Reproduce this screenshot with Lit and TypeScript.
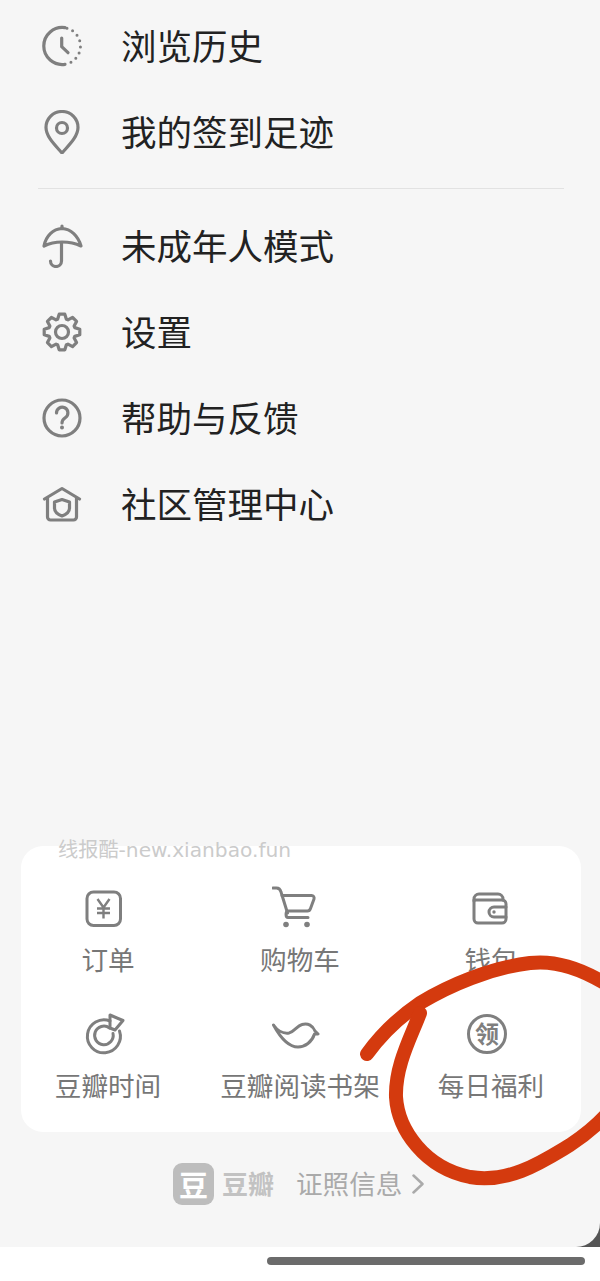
import { LitElement, html, css, svg } from "lit";
import { customElement } from "lit/decorators.js";

function gearPath(cx: number, cy: number, outer: number, root: number, teeth: number) {
  const pts: string[] = [];
  const step = (Math.PI * 2) / teeth;
  for (let i = 0; i < teeth; i++) {
    const a = -Math.PI / 2 + i * step;
    const offs: [number, number][] = [
      [-0.42, root],
      [-0.2, outer],
      [0.2, outer],
      [0.42, root],
    ];
    for (const [o, r] of offs) {
      const t = a + o * step;
      pts.push(`${(cx + r * Math.cos(t)).toFixed(2)} ${(cy + r * Math.sin(t)).toFixed(2)}`);
    }
  }
  return "M" + pts.join("L") + "Z";
}

const rowIcon = (vy: number, body: unknown) => html`<svg class="ri" viewBox="40 ${vy} 44 44">${body}</svg>`;
const cardIcon = (vx: number, vy: number, body: unknown) =>
  html`<svg class="ci" viewBox="${vx} ${vy} 56 44">${body}</svg>`;

const icons = {
  clock: rowIcon(24, svg`
    <path d="M65 27.7A18.500 18.500 0 1 0 65 64.300"/>
    <path class="dots" d="M67 28.200A18.500 18.500 0 0 1 67 63.800"/>
    <path d="M61.700 38V46.700L68 52.700"/>`),
  pin: rowIcon(110, svg`
    <path d="M62 153C56 146 46 137 46 127.500A16 16 0 0 1 78 127.500C78 137 68 146 62 153Z"/>
    <circle cx="62" cy="128" r="5.500"/>`),
  umbrella: rowIcon(224, svg`
    <path d="M44 246C46 236 53 229 62 228.500C71 229 78 236 81 246C75 243 68 242 62 242C56 242 50 243 44 246Z"/>
    <path d="M62 226V228M61.500 243V261A5.500 5.500 0 0 1 50.500 261"/>`),
  gear: rowIcon(310, svg`
    <path d="${gearPath(62, 332, 18, 13.5, 8)}"/>
    <circle cx="62" cy="332" r="6.500"/>`),
  help: rowIcon(396, svg`
    <circle cx="62" cy="418" r="18"/>
    <path d="M56.500 413A5.700 5.700 0 1 1 65.500 417.500C63.300 419 62 420 62 423"/>
    <circle class="fill" cx="62" cy="427.500" r="2"/>`),
  house: rowIcon(482, svg`
    <path d="M44.500 499L62 488.500L79.500 499M47.500 497.500V517A3 3 0 0 0 50.500 520H73.500A3 3 0 0 0 76.500 517V497.500"/>
    <path d="M62 499.500L69.500 502V508C69.500 512.500 66 514.500 62 516C58 514.500 54.500 512.500 54.500 508V502Z"/>`),
  order: cardIcon(80, 886, svg`
    <rect x="87" y="892" width="33.500" height="33.500" rx="6.500"/>
    <path class="thin" d="M97.500 899L103.500 907.500L109.500 899M103.500 908V918.500M97 908.500H110M97 913H110"/>`),
  cart: cardIcon(272, 886, svg`
    <path d="M273 888H276.500C279 888 280.500 890 281 892L287.500 913"/>
    <path d="M282 895.500H311.500C313.500 895.500 314.500 897 314 899L310.500 908.500C310 910 309 911 307.500 911H287.500C285.500 912 285.500 917.500 288 917.500H308"/>
    <circle class="fill" cx="286" cy="924.500" r="2.800"/>
    <circle class="fill" cx="307" cy="924.500" r="2.800"/>`),
  wallet: cardIcon(463, 886, svg`
    <path d="M474 901V899A5 5 0 0 1 479 894H498A5 5 0 0 1 503 899V900"/>
    <path d="M474 900H502A4 4 0 0 1 506 904V919A4 4 0 0 1 502 923H478A4 4 0 0 1 474 919Z"/>
    <path d="M506 907H494A5 5 0 0 0 494 917H506"/>
    <circle class="fill" cx="494" cy="912" r="1.700"/>`),
  time: cardIcon(80, 1012, svg`
    <path d="M110 1021A16.500 16.500 0 1 0 119.500 1031"/>
    <path d="M109.500 1028A9.300 9.300 0 1 0 113 1033.500"/>
    <path d="M110 1015L123 1020.500L115 1030L110 1028Z"/>`),
  bird: cardIcon(272, 1012, svg`
    <path d="M273.500 1025C277 1030 283 1034 289 1033C294 1032 297 1026 302 1024.500C308 1022.500 313 1026 315 1031L318 1034H314.500C312 1042 305 1047 298 1047C289 1047 280 1037 273.500 1025Z"/>`),
  ling: cardIcon(463, 1012, svg`
    <circle cx="487" cy="1034" r="18.500"/>
    <text class="seal" x="487" y="1042.500" text-anchor="middle">领</text>`),
};

const groupA = [
  { icon: icons.clock, label: "浏览历史" },
  { icon: icons.pin, label: "我的签到足迹" },
];
const groupB = [
  { icon: icons.umbrella, label: "未成年人模式" },
  { icon: icons.gear, label: "设置" },
  { icon: icons.help, label: "帮助与反馈" },
  { icon: icons.house, label: "社区管理中心" },
];
const tiles = [
  { icon: icons.order, label: "订单" },
  { icon: icons.cart, label: "购物车" },
  { icon: icons.wallet, label: "钱包" },
  { icon: icons.time, label: "豆瓣时间" },
  { icon: icons.bird, label: "豆瓣阅读书架" },
  { icon: icons.ling, label: "每日福利" },
];

@customElement("app-root")
export class AppRoot extends LitElement {
  static styles = css`
    :host {
      display: block;
      position: relative;
      width: 600px;
      height: 1281px;
      overflow: hidden;
      background: #fff;
      font-family: "Noto Sans CJK SC", "Liberation Sans", sans-serif;
    }
    .frame {
      height: 1247px;
      background: #555;
    }
    .panel {
      height: 100%;
      box-sizing: border-box;
      padding-top: 3px;
      background: #f6f6f6;
      border-bottom-right-radius: 24px;
      display: flex;
      flex-direction: column;
      position: relative;
    }
    .row {
      height: 86px;
      display: flex;
      align-items: center;
      gap: 37px;
      padding-left: 40px;
      font-size: 35.5px;
      color: #222;
    }
    .row span {
      line-height: 84px;
      padding-bottom: 2px;
    }
    .rule {
      height: 1px;
      margin: 13px 36px 14px 38px;
      background: #e2e2e2;
    }
    svg {
      fill: none;
      stroke: #7f7f7f;
      stroke-linecap: round;
      stroke-linejoin: round;
      flex: none;
      display: block;
    }
    .ri {
      width: 44px;
      height: 44px;
      stroke-width: 3.2;
    }
    .ci {
      width: 56px;
      height: 44px;
      stroke-width: 3;
    }
    .thin {
      stroke-width: 2.4;
      stroke-linecap: butt;
    }
    .dots {
      stroke-dasharray: 0 6.2;
      stroke-width: 3;
    }
    .fill {
      fill: #7f7f7f;
      stroke: none;
    }
    .seal {
      fill: #7f7f7f;
      stroke: none;
      font-size: 24px;
      font-weight: 700;
    }
    .card {
      margin: auto 19px 0 21px;
      box-sizing: border-box;
      height: 286px;
      padding: 40px 4px 28px 0;
      background: #fff;
      border-radius: 22px;
      display: grid;
      grid-template-columns: 174px 210px 172px;
      grid-auto-rows: 92px;
      row-gap: 34px;
    }
    .tile {
      display: flex;
      flex-direction: column;
      align-items: center;
      gap: 11px;
    }
    .tile span {
      font-size: 26.6px;
      line-height: 36px;
      color: #777;
      white-space: nowrap;
    }
    .foot {
      height: 42px;
      margin: 31px 0 42px;
      padding-left: 173px;
      display: flex;
      align-items: center;
    }
    .logo {
      width: 41px;
      height: 42px;
      border-radius: 9px;
      background: #bdbdbd;
      color: #fff;
      font-size: 29px;
      font-weight: 700;
      display: flex;
      align-items: center;
      justify-content: center;
    }
    .brand {
      margin-left: 8px;
      padding-bottom: 3px;
      font-size: 26px;
      font-weight: 700;
      color: #c2c2c2;
    }
    .lic {
      margin-left: 22px;
      padding-bottom: 3px;
      font-size: 26.6px;
      color: #aaa;
    }
    .chev {
      margin-left: 10px;
      width: 12px;
      height: 20px;
      stroke: #aaa;
      stroke-width: 2.5;
    }
    .mark {
      position: absolute;
      left: 58px;
      top: 836px;
      font-family: "DejaVu Sans", "Noto Sans CJK SC", sans-serif;
      font-size: 20.2px;
      line-height: 28px;
      color: #cbcbcb;
      white-space: nowrap;
    }
    .bar {
      height: 8px;
      margin: 10px 15px 0 267px;
      border-radius: 4px;
      background: #6b6b6b;
    }
    .ink {
      position: absolute;
      left: 0;
      top: 0;
      width: 600px;
      height: 1281px;
      stroke: #d43a0e;
      stroke-width: 14;
      pointer-events: none;
    }
  `;

  private row(r: { icon: unknown; label: string }) {
    return html`<div class="row">${r.icon}<span>${r.label}</span></div>`;
  }

  render() {
    return html`
      <div class="frame">
        <div class="panel">
          ${groupA.map((r) => this.row(r))}
          <div class="rule"></div>
          ${groupB.map((r) => this.row(r))}
          <div class="card">
            ${tiles.map((t) => html`<div class="tile">${t.icon}<span>${t.label}</span></div>`)}
          </div>
          <div class="foot">
            <div class="logo">豆</div>
            <div class="brand">豆瓣</div>
            <div class="lic">证照信息</div>
            <svg class="chev" viewBox="0 0 12 20"><path d="M1.500 1.500L10.500 10L1.500 18.500"/></svg>
          </div>
          <div class="mark">线报酷-new.xianbao.fun</div>
        </div>
      </div>
      <div class="bar"></div>
      <svg class="ink" viewBox="0 0 600 1281">
        <path d="M367 1054C380 1036 398 1018 420 1003C450 985 490 968 530 963C555 960 580 968 606 984"/>
        <path d="M420 1013C412 1035 395 1065 396 1097C398 1130 425 1168 470 1177C510 1184 545 1160 570 1145C585 1135 595 1127 606 1115"/>
      </svg>
    `;
  }
}
